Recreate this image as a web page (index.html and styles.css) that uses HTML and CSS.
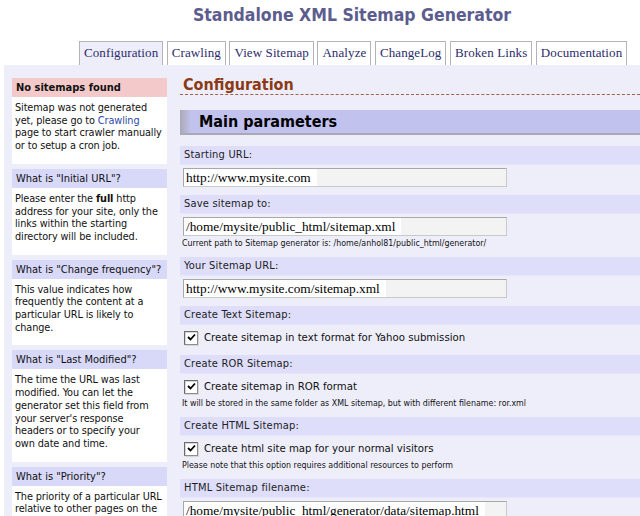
FILE: index.html
```html
<!DOCTYPE html>
<html>
<head>
<meta charset="utf-8">
<title>Standalone XML Sitemap Generator</title>
<link rel="stylesheet" href="styles.css">
</head>
<body>
<header class="top">
  <h1 class="title">Standalone XML Sitemap Generator</h1>
  <nav class="tabs">
    <a class="tab active" href="#">Configuration</a>
    <a class="tab" href="#">Crawling</a>
    <a class="tab" href="#">View Sitemap</a>
    <a class="tab" href="#">Analyze</a>
    <a class="tab" href="#">ChangeLog</a>
    <a class="tab" href="#">Broken Links</a>
    <a class="tab" href="#">Documentation</a>
  </nav>
</header>
<div class="wrap">
  <aside class="side">
    <div class="box">
      <div class="box-h warn">No sitemaps found</div>
      <div class="box-b">Sitemap was not generated yet, please go to <a href="#">Crawling</a> page to start crawler manually or to setup a cron job.</div>
    </div>
    <div class="box">
      <div class="box-h">What is "Initial URL"?</div>
      <div class="box-b">Please enter the <b>full</b> http address for your site, only the links within the starting directory will be included.</div>
    </div>
    <div class="box">
      <div class="box-h">What is "Change frequency"?</div>
      <div class="box-b">This value indicates how frequently the content at a particular URL is likely to change.</div>
    </div>
    <div class="box">
      <div class="box-h">What is "Last Modified"?</div>
      <div class="box-b">The time the URL was last modified. You can let the generator set this field from your server's response headers or to specify your own date and time.</div>
    </div>
    <div class="box">
      <div class="box-h">What is "Priority"?</div>
      <div class="box-b">The priority of a particular URL relative to other pages on the site.</div>
    </div>
  </aside>
  <main class="main">
    <h2 class="heading">Configuration</h2>
    <h3 class="section">Main parameters</h3>

    <div class="group">
      <div class="label">Starting URL:</div>
      <div class="input"><span class="val">http://www.mysite.com</span></div>
    </div>
    <div class="group">
      <div class="label">Save sitemap to:</div>
      <div class="input"><span class="val">/home/mysite/public_html/sitemap.xml</span></div>
      <div class="note">Current path to Sitemap generator is: /home/anhol81/public_html/generator/</div>
    </div>
    <div class="group">
      <div class="label">Your Sitemap URL:</div>
      <div class="input"><span class="val">http://www.mysite.com/sitemap.xml</span></div>
    </div>
    <div class="group">
      <div class="label">Create Text Sitemap:</div>
      <div class="check"><span class="cb"><svg viewBox="0 0 9 9" width="9" height="9"><path d="M1 4 L3.5 6.5 L8 1.5" fill="none" stroke="#000" stroke-width="1.8"/></svg></span>Create sitemap in text format for Yahoo submission</div>
    </div>
    <div class="group">
      <div class="label">Create ROR Sitemap:</div>
      <div class="check"><span class="cb"><svg viewBox="0 0 9 9" width="9" height="9"><path d="M1 4 L3.5 6.5 L8 1.5" fill="none" stroke="#000" stroke-width="1.8"/></svg></span>Create sitemap in ROR format</div>
      <div class="note">It will be stored in the same folder as XML sitemap, but with different filename: ror.xml</div>
    </div>
    <div class="group">
      <div class="label">Create HTML Sitemap:</div>
      <div class="check"><span class="cb"><svg viewBox="0 0 9 9" width="9" height="9"><path d="M1 4 L3.5 6.5 L8 1.5" fill="none" stroke="#000" stroke-width="1.8"/></svg></span>Create html site map for your normal visitors</div>
      <div class="note">Please note that this option requires additional resources to perform</div>
    </div>
    <div class="group">
      <div class="label">HTML Sitemap filename:</div>
      <div class="input"><span class="val">/home/mysite/public_html/generator/data/sitemap.html</span></div>
    </div>
  </main>
</div>
</body>
</html>
```
FILE: styles.css
```css
html, body {
  margin: 0;
  padding: 0;
  background: #ffffff;
  overflow: hidden;
}
body {
  font-family: "DejaVu Sans Condensed", "DejaVu Sans", sans-serif;
  font-size: 11px;
  color: #000;
}
.top {
  background: #fff;
}
.title {
  margin: 0;
  padding: 4px 0 0 64px;
  height: 41px;
  box-sizing: border-box;
  text-align: center;
  font-size: 17.5px;
  line-height: 22px;
  font-weight: bold;
  color: #5c5c8e;
}
.tabs {
  display: flex;
  gap: 3.5px;
  padding-left: 79px;
  height: 24px;
  align-items: flex-end;
}
.tab {
  display: block;
  height: 23px;
  line-height: 22px;
  padding: 0 4px;
  border: 1px solid #b4b4b4;
  border-bottom: none;
  background: #fff;
  color: #2c2c6c;
  text-decoration: none;
  font-family: "Liberation Serif", serif;
  font-size: 13px;
  letter-spacing: 0.1px;
}
.tab.active {
  background: #eeeefb;
}
.wrap {
  display: grid;
  grid-template-columns: 176px 1fr;
  background: #eeeefb;
  margin-left: 4px;
  min-height: 460px;
}
.side {
  padding: 13px 0 0 8px;
  display: flex;
  flex-direction: column;
  gap: 5px;
}
.box {
  width: 155px;
  background: #fff;
}
.box-h {
  height: 19px;
  line-height: 19px;
  padding: 0 4px;
  background: #d8d8f8;
  color: #111;
  font-size: 11px;
}
.box-h.warn {
  background: #f3c9c9;
  font-weight: bold;
}
.box-b {
  padding: 5px 5px 11px 3px;
  line-height: 12.7px;
  font-size: 10.8px;
  letter-spacing: -0.1px;
  color: #111;
}
.box-b a {
  color: #2f4aa6;
  text-decoration: none;
}
.main {
  min-width: 0;
}
.heading {
  margin: 10px 0 0 0;
  height: 19px;
  line-height: 19px;
  padding: 0 0 0 3px;
  border-bottom: 1px dashed #a0604c;
  font-size: 16px;
  font-weight: bold;
  color: #8c3a16;
}
.section {
  margin: 15px 0 11px 0;
  height: 23px;
  line-height: 23px;
  padding-left: 19px;
  background: linear-gradient(to right, #a9a9b4 0px, #c2c2ee 11px, #c2c2ef 100%);
  border-bottom: 2px solid #a9a9b6;
  font-size: 16px;
  font-weight: bold;
  color: #000;
}
.group {
  margin-bottom: 8px;
}
.label {
  height: 18px;
  line-height: 18px;
  padding-left: 4px;
  background: #dedefa;
  border-bottom: 1px solid #e6e6fb;
  margin-bottom: 3px;
  font-size: 11px;
  letter-spacing: 0.2px;
  color: #222;
}
.input {
  width: 324px;
  height: 19px;
  box-sizing: border-box;
  margin-left: 3px;
  border: 1px solid #c9c9c9;
  border-top-color: #a8a8a8;
  border-left-color: #a8a8a8;
  background: #f3f3f3;
  overflow: hidden;
  white-space: nowrap;
}
.val {
  display: inline-block;
  height: 17px;
  line-height: 17px;
  padding: 0 6px 0 2px;
  background: #fff;
  font-family: "Liberation Serif", serif;
  font-size: 13.3px;
  color: #000;
}
.check {
  display: flex;
  align-items: center;
  height: 19px;
  padding-left: 4px;
  font-size: 11.3px;
  color: #111;
}
.cb {
  width: 14px;
  height: 14px;
  box-sizing: border-box;
  border: 1px solid #8e8e8e;
  border-top-color: #6a6a6a;
  border-left-color: #6a6a6a;
  box-shadow: 1px 1px 0 #d4d4d4, inset 1px 1px 0 #d8d8d8;
  background: #fff;
  display: flex;
  align-items: center;
  justify-content: center;
  margin-right: 6px;
  flex: none;
}
.note {
  margin-top: 2px;
  height: 11px;
  line-height: 11px;
  padding-left: 2px;
  font-size: 8.8px;
  color: #111;
  white-space: nowrap;
}
```
